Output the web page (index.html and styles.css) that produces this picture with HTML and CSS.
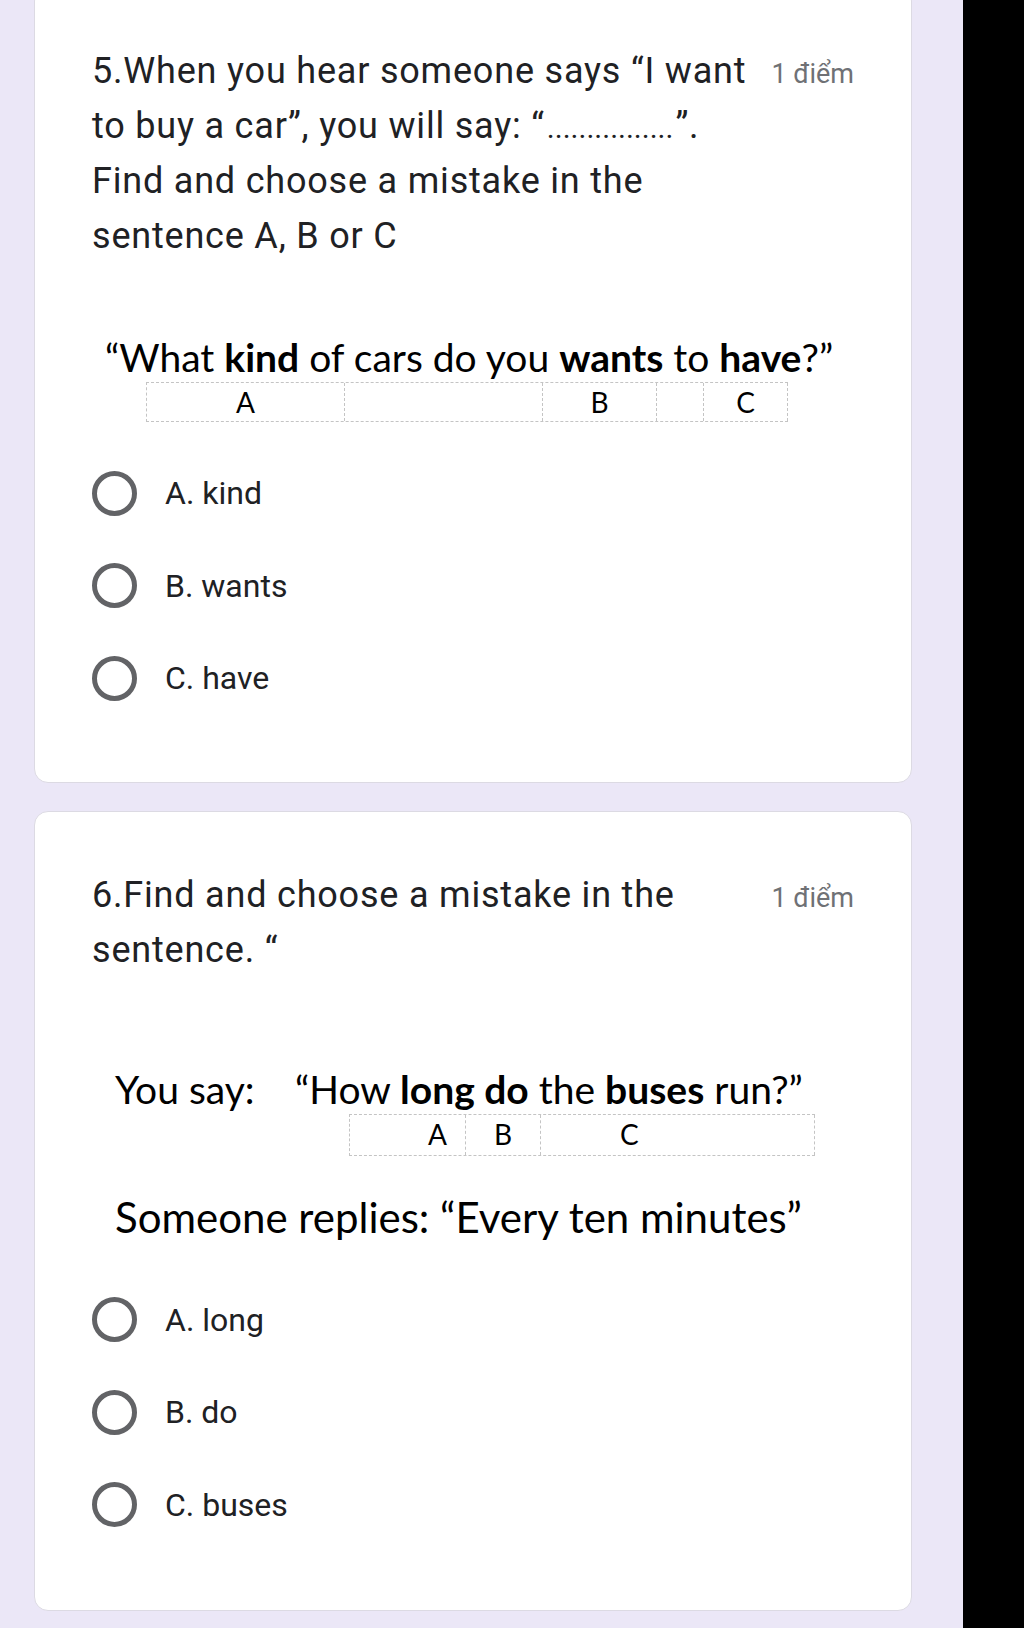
FILE: index.html
```html
<!DOCTYPE html>
<html lang="vi">
<head>
    <meta charset="UTF-8">
    <title>Bài kiểm tra</title>
    <link rel="stylesheet" href="styles.css">
</head>
<body>
    <div class="screen">
        <div class="form">
            <!-- câu 5 -->
            <div class="card card-first">
                <div class="q-head">
                    <div class="q-title">5.When you hear someone says “I want to buy a car”, you will say: “<span class="dots">................</span>”.<br>Find and choose a mistake in the sentence A, B or C</div>
                    <div class="q-points">1 điểm</div>
                </div>
                <div class="pic pic-one">
                    <div class="pic-line">“What <b>kind</b> of cars do you <b>wants</b> to <b>have</b>?”</div>
                    <div class="marks marks-one">
                        <div class="mark w198">A</div>
                        <div class="mark w198"></div>
                        <div class="mark w114">B</div>
                        <div class="mark w47"></div>
                        <div class="mark w84">C</div>
                    </div>
                </div>
                <ul class="options">
                    <li><span class="radio"></span>A. kind</li>
                    <li><span class="radio"></span>B. wants</li>
                    <li><span class="radio"></span>C. have</li>
                </ul>
            </div>

            <!-- câu 6 -->
            <div class="card">
                <div class="q-head">
                    <div class="q-title">6.Find and choose a mistake in the sentence. “</div>
                    <div class="q-points">1 điểm</div>
                </div>
                <div class="pic pic-two">
                    <div class="pic-line"><span class="say">You say:</span>“How <b>long do</b> the <b>buses</b> run?”</div>
                    <div class="marks marks-two">
                        <div class="mark w116 to-right">A</div>
                        <div class="mark w75">B</div>
                        <div class="mark w274 to-left">C</div>
                    </div>
                    <div class="pic-line reply">Someone replies: “Every ten minutes”</div>
                </div>
                <ul class="options options-two">
                    <li><span class="radio"></span>A. long</li>
                    <li><span class="radio"></span>B. do</li>
                    <li><span class="radio"></span>C. buses</li>
                </ul>
            </div>
        </div>
        <div class="side"></div>
    </div>
</body>
</html>
```

FILE: styles.css
```css
body {
    margin: 0;
    background: #ebe7f7;
}
.screen {
    display: flex;
    height: 1628px;
    overflow: hidden;
}
.form {
    width: 963px;
    background: #ebe7f7;
}
.side {
    flex: 1;
    background: #000;
}

.card {
    width: 878px;
    margin-left: 34px;
    margin-bottom: 28px;
    padding: 56px 57px 59px;
    box-sizing: border-box;
    background: #fff;
    border: 1px solid #dcdae3;
    border-radius: 14px;
}
.card-first {
    margin-top: -13px;
    padding-bottom: 57px;
}

.q-head {
    display: flex;
    align-items: baseline;
}
.q-title {
    width: 680px;
    font-family: Roboto, "Noto Sans", sans-serif;
    font-size: 36px;
    letter-spacing: 0.8px;
    line-height: 55px;
    color: #202124;
}
.dots {
    margin: 0 2px;
    font-size: 30px;
    line-height: 1;
    letter-spacing: 0;
}
.q-points {
    flex-shrink: 0;
    margin-left: auto;
    white-space: nowrap;
    font-family: Roboto, "Noto Sans", sans-serif;
    font-size: 27px;
    color: #6f7175;
}

.pic {
    font-family: Lato, "Open Sans", sans-serif;
    color: #000;
}
.pic-line {
    font-size: 39px;
    line-height: 46px;
    white-space: nowrap;
}
.pic-one {
    margin-top: 70px;
    padding-left: 13px;
}
.pic-two {
    margin-top: 88px;
    padding-left: 23px;
}
.say {
    display: inline-block;
    width: 180px;
}
.reply {
    margin-top: 38px;
    font-size: 42px;
}

.marks {
    display: flex;
    margin-top: 2px;
    border: 1px dashed #c4c4c4;
    border-right: 0;
    font-size: 28px;
}
.marks-one {
    margin-left: 41px;
    width: 641px;
    height: 38px;
}
.marks-two {
    margin-left: 234px;
    width: 465px;
    height: 40px;
}
.mark {
    box-sizing: border-box;
    border-right: 1px dashed #c4c4c4;
    text-align: center;
    line-height: 38px;
}
.w198 { width: 198px; }
.w114 { width: 114px; }
.w47 { width: 47px; }
.w84 { width: 84px; }
.w116 { width: 116px; }
.w75 { width: 75px; }
.w274 { width: 274px; }
.to-right {
    text-align: right;
    padding-right: 18px;
}
.to-left {
    text-align: left;
    padding-left: 79px;
}

.options {
    list-style: none;
    margin: 25px 0 0;
    padding: 0;
}
.options-two {
    margin-top: 34px;
}
.options li {
    display: flex;
    align-items: center;
    height: 92.5px;
    font-family: Roboto, "Noto Sans", sans-serif;
    font-size: 32px;
    color: #202124;
}
.radio {
    width: 45px;
    height: 45px;
    box-sizing: border-box;
    border: 5px solid #626366;
    border-radius: 50%;
    margin-right: 28px;
}
```
